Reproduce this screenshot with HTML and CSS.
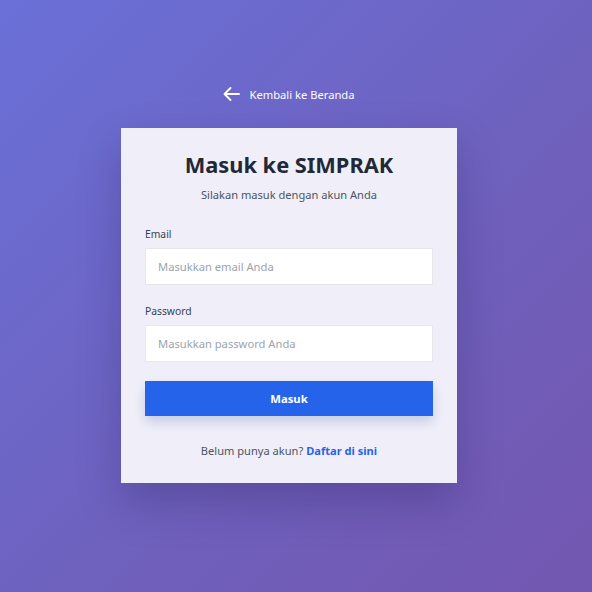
FILE: index.html
```html
<!DOCTYPE html>
<html lang="id">
<head>
<meta charset="utf-8">
<title>Masuk ke SIMPRAK</title>
<link rel="stylesheet" href="styles.css">
</head>
<body>
<main class="page">
  <a class="back" href="#">
    <svg class="back-icon" width="17" height="14" viewBox="0 0 17 14" fill="none" stroke="currentColor" stroke-width="1.8" stroke-linecap="round" stroke-linejoin="round"><path d="M16 7H1.5M7.5 1L1.5 7l6 6"/></svg>
    <span>Kembali ke Beranda</span>
  </a>
  <section class="card">
    <h1 class="title">Masuk ke SIMPRAK</h1>
    <p class="subtitle">Silakan masuk dengan akun Anda</p>
    <form class="form">
      <div class="field">
        <label class="label" for="email">Email</label>
        <input class="input" id="email" type="email" placeholder="Masukkan email Anda">
      </div>
      <div class="field">
        <label class="label" for="password">Password</label>
        <input class="input" id="password" type="password" placeholder="Masukkan password Anda">
      </div>
      <button class="btn" type="button">Masuk</button>
    </form>
    <p class="foot">Belum punya akun? <a class="link" href="#">Daftar di sini</a></p>
  </section>
</main>
</body>
</html>
```
FILE: styles.css
```css
* { box-sizing: border-box; }
html, body { margin: 0; height: 100%; }
body {
  font-family: "Noto Sans", "Open Sans", sans-serif;
  background: linear-gradient(135deg, #6a70d8 0%, #6f60bc 60%, #7357b0 100%);
  color: #1f2937;
}
.page {
  min-height: 100%;
  display: flex;
  flex-direction: column;
  align-items: center;
  padding-top: 85px;
  padding-right: 14px;
}
.back {
  display: flex;
  align-items: center;
  gap: 9px;
  color: #fff;
  text-decoration: none;
  font-size: 11.2px;
  height: 18px;
  margin-left: 0;
}
.back-icon { display: block; }
.card {
  margin-top: 25px;
  width: 336px;
  background: #f0eff9;
  padding: 23px 24px 24px;
  box-shadow: 0 20px 40px rgba(30, 20, 80, 0.25);
}
.title {
  margin: 0;
  text-align: center;
  font-size: 21.8px;
  font-weight: 700;
  color: #1f2937;
  line-height: 28px;
}
.subtitle {
  margin: 8px 0 0;
  text-align: center;
  font-size: 11.1px;
  color: #4b5563;
  line-height: 16px;
}
.form {
  margin-top: 24px;
  display: flex;
  flex-direction: column;
}
.field { display: flex; flex-direction: column; margin-bottom: 19px; }
.label {
  font-size: 10.3px;
  color: #374151;
  line-height: 14px;
  margin-bottom: 7px;
}
.input {
  height: 37px;
  border: 1px solid #e5e7eb;
  background: #fff;
  padding: 0 12px;
  font-family: inherit;
  font-size: 11.2px;
  color: #1f2937;
  outline: none;
}
.input::placeholder { color: #9ca3af; }
.btn {
  height: 35px;
  border: 0;
  background: #2563eb;
  color: #fff;
  font-family: inherit;
  font-weight: 700;
  font-size: 11.3px;
  box-shadow: 0 6px 12px rgba(37, 60, 150, 0.2);
}
.foot {
  margin: 27px 0 0;
  text-align: center;
  font-size: 11.1px;
  color: #4b5563;
  line-height: 16px;
}
.link { color: #2563eb; font-weight: 700; text-decoration: none; }
```
